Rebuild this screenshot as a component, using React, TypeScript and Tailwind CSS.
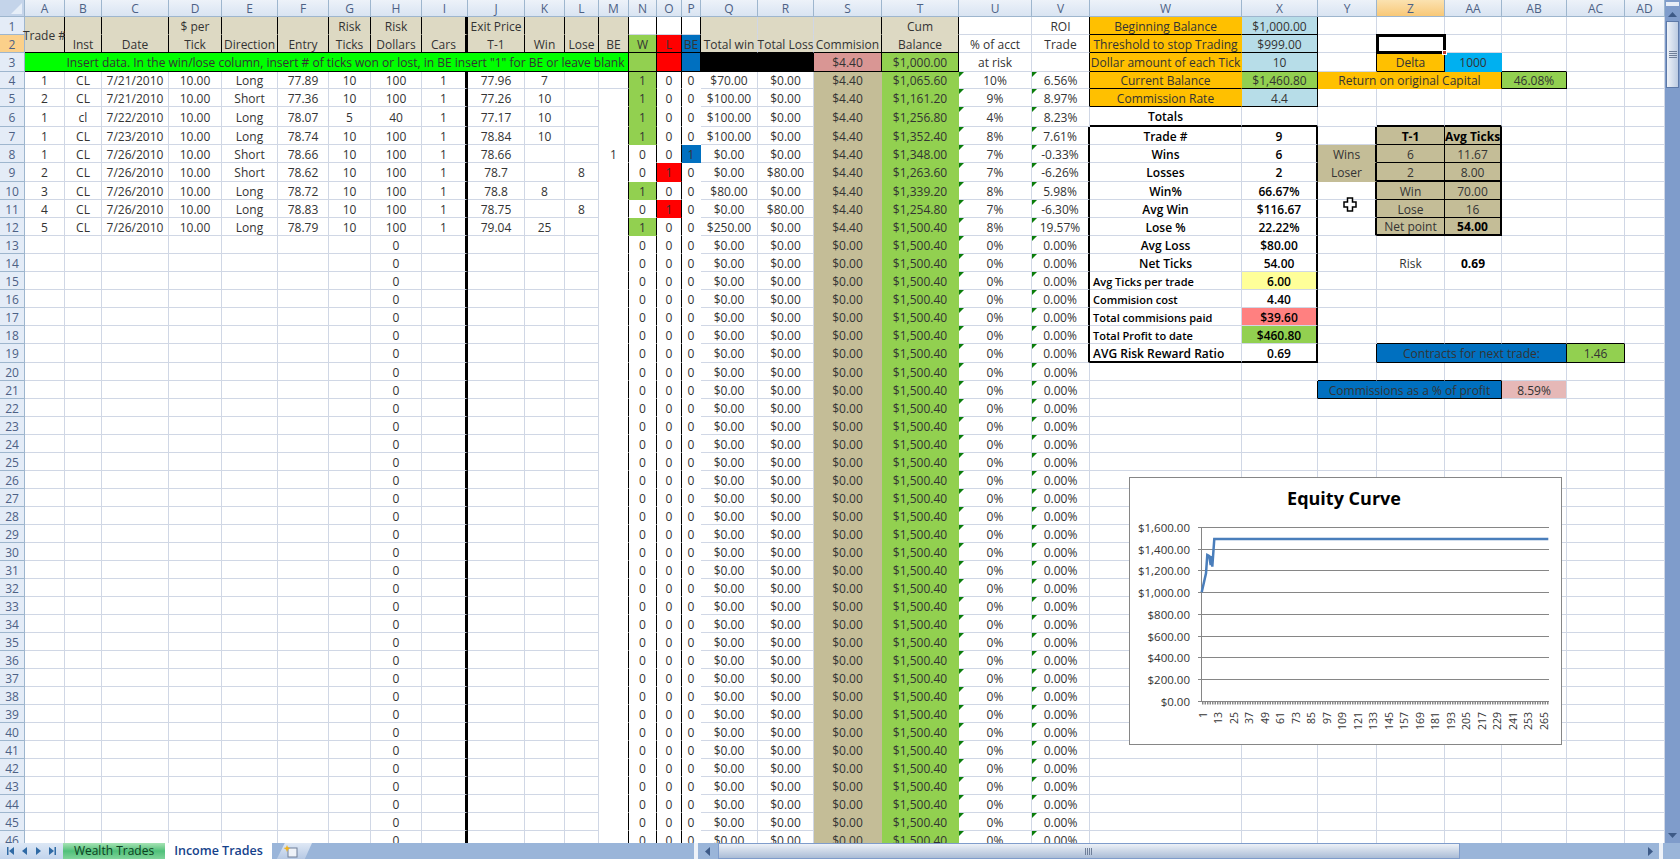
const COLS = ['A','B','C','D','E','F','G','H','I','J','K','L','M','N','O','P','Q','R','S','T','U','V','W','X','Y','Z','AA','AB','AC','AD'];
const ROW_COUNT = 46;

const GREEN = 'bg-[#92d050]';
const TAN = 'bg-[#c4bd97]';
const HEAD = 'bg-[#ddd9c3]';
const ORANGE = 'bg-[#ffc000]';
const SKY = 'bg-[#b7dde8]';
const BLUE = 'bg-[#0070c0]';
const RED = 'bg-[#ff0000]';

type Edge = 'g' | 'k' | 'K' | 'T' | 'n';
const RIGHT: Record<Edge, string> = {
  g: 'border-r border-r-[#d0d7e5]',
  k: 'border-r border-r-black',
  K: 'border-r-2 border-r-black',
  T: 'border-r-[3px] border-r-black',
  n: 'border-r border-r-transparent',
};
const BOTTOM: Record<Edge, string> = {
  g: 'border-b border-b-[#d0d7e5]',
  k: 'border-b border-b-black',
  K: 'border-b-2 border-b-black',
  T: 'border-b-[3px] border-b-black',
  n: 'border-b border-b-transparent',
};

// trade log, rows 4-12
const trades = [
  ['1','CL','7/21/2010','10.00','Long','77.89','10','100','1','77.96','7','','','1','0','0','$70.00','$0.00','$4.40','$1,065.60','10%','6.56%'],
  ['2','CL','7/21/2010','10.00','Short','77.36','10','100','1','77.26','10','','','1','0','0','$100.00','$0.00','$4.40','$1,161.20','9%','8.97%'],
  ['1','cl','7/22/2010','10.00','Long','78.07','5','40','1','77.17','10','','','1','0','0','$100.00','$0.00','$4.40','$1,256.80','4%','8.23%'],
  ['1','CL','7/23/2010','10.00','Long','78.74','10','100','1','78.84','10','','','1','0','0','$100.00','$0.00','$4.40','$1,352.40','8%','7.61%'],
  ['1','CL','7/26/2010','10.00','Short','78.66','10','100','1','78.66','','','1','0','0','1','$0.00','$0.00','$4.40','$1,348.00','7%','-0.33%'],
  ['2','CL','7/26/2010','10.00','Short','78.62','10','100','1','78.7','','8','','0','1','0','$0.00','$80.00','$4.40','$1,263.60','7%','-6.26%'],
  ['3','CL','7/26/2010','10.00','Long','78.72','10','100','1','78.8','8','','','1','0','0','$80.00','$0.00','$4.40','$1,339.20','8%','5.98%'],
  ['4','CL','7/26/2010','10.00','Long','78.83','10','100','1','78.75','','8','','0','1','0','$0.00','$80.00','$4.40','$1,254.80','7%','-6.30%'],
  ['5','CL','7/26/2010','10.00','Long','78.79','10','100','1','79.04','25','','','1','0','0','$250.00','$0.00','$4.40','$1,500.40','8%','19.57%'],
];
const emptyTrade = ['','','','','','','','0','','','','','','0','0','0','$0.00','$0.00','$0.00','$1,500.40','0%','0.00%'];

interface Special {
  t?: string;
  bg?: string;
  x?: string;
  r?: Edge;
  b?: Edge;
}

const specials: Record<string, Special> = {
  A1: { t: 'Trade #', bg: HEAD, x: 'row-span-2 overflow-visible', r: 'k', b: 'k' },
  B2: { t: 'Inst' }, C2: { t: 'Date' }, D1: { t: '$ per' }, D2: { t: 'Tick' }, E2: { t: 'Direction' },
  F2: { t: 'Entry' }, G1: { t: 'Risk' }, G2: { t: 'Ticks' }, H1: { t: 'Risk' }, H2: { t: 'Dollars' },
  I2: { t: 'Cars' }, J1: { t: 'Exit Price' }, J2: { t: 'T-1' }, K2: { t: 'Win' }, L2: { t: 'Lose' }, M2: { t: 'BE' },
  N2: { t: 'W' }, O2: { t: 'L' }, P2: { t: 'BE' }, Q2: { t: 'Total win' }, R2: { t: 'Total Loss' }, S2: { t: 'Commision' },
  T1: { t: 'Cum' }, T2: { t: 'Balance' }, U2: { t: '% of acct' }, U3: { t: 'at risk' }, V1: { t: 'ROI' }, V2: { t: 'Trade' },
  A3: { t: 'Insert data. In the win/lose column, insert # of ticks won or lost, in BE insert "1" for BE or leave blank', bg: 'bg-[#00ff00]', x: 'col-span-13 pl-[38px]', r: 'k', b: 'k' },
  N3: { bg: GREEN }, O3: { bg: RED }, P3: { bg: BLUE }, Q3: { bg: 'bg-black', r: 'n' }, R3: { bg: 'bg-black', r: 'n' },
  S3: { t: '$4.40', bg: 'bg-[#d99694]' }, T3: { t: '$1,000.00', bg: GREEN },

  W1: { t: 'Beginning Balance', bg: ORANGE, r: 'n', b: 'k' }, X1: { t: '$1,000.00', bg: SKY, r: 'k', b: 'k' },
  W2: { t: 'Threshold to stop Trading', bg: ORANGE, r: 'n', b: 'k' }, X2: { t: '$999.00', bg: SKY, r: 'k', b: 'k' },
  W3: { t: 'Dollar amount of each Tick', bg: ORANGE, r: 'n', b: 'k' }, X3: { t: '10', bg: SKY, r: 'k', b: 'k' },
  W4: { t: 'Current Balance', bg: ORANGE, r: 'n', b: 'k' }, X4: { t: '$1,460.80', bg: GREEN, r: 'k', b: 'k' },
  W5: { t: 'Commission Rate', bg: ORANGE, r: 'n', b: 'k' }, X5: { t: '4.4', bg: SKY, r: 'k', b: 'k' },
  Y3: { r: 'k' }, Z2: { x: 'z-10' },
  Z3: { t: 'Delta', bg: ORANGE, r: 'k', b: 'k' }, AA3: { t: '1000', bg: 'bg-[#00b0f0]', r: 'n', b: 'n' },
  Y4: { t: 'Return on original Capital', bg: ORANGE, x: 'col-span-3', r: 'k', b: 'n' },
  AB3: { b: 'k' }, AB4: { t: '46.08%', bg: GREEN, r: 'k', b: 'k' },
  W6: { t: 'Totals', x: 'font-semibold text-black', b: 'K' }, X6: { b: 'K' },
  Z6: { b: 'K' }, AA6: { b: 'K' },

  W7: { t: 'Trade #' }, X7: { t: '9' }, W8: { t: 'Wins' }, X8: { t: '6' }, W9: { t: 'Losses' }, X9: { t: '2' },
  W10: { t: 'Win%' }, X10: { t: '66.67%' }, W11: { t: 'Avg Win' }, X11: { t: '$116.67' }, W12: { t: 'Lose %' }, X12: { t: '22.22%' },
  W13: { t: 'Avg Loss' }, X13: { t: '$80.00' }, W14: { t: 'Net Ticks' }, X14: { t: '54.00' },
  W15: { t: 'Avg Ticks per trade' }, X15: { t: '6.00', bg: 'bg-[#ffff99]' },
  W16: { t: 'Commision cost' }, X16: { t: '4.40' },
  W17: { t: 'Total commisions paid' }, X17: { t: '$39.60', bg: 'bg-[#ff8080]' },
  W18: { t: 'Total Profit to date' }, X18: { t: '$460.80', bg: GREEN },
  W19: { t: 'AVG Risk Reward Ratio' }, X19: { t: '0.69' },

  Y8: { t: 'Wins', bg: TAN, r: 'K', b: 'n' }, Y9: { t: 'Loser', bg: TAN, r: 'K', b: 'n' },
  Z7: { t: 'T-1', bg: TAN, x: 'font-bold text-black', r: 'k', b: 'k' }, AA7: { t: 'Avg Ticks', bg: TAN, x: 'font-bold text-black', r: 'K', b: 'k' },
  Z8: { t: '6', bg: TAN, r: 'k', b: 'k' }, AA8: { t: '11.67', bg: TAN, r: 'K', b: 'k' },
  Z9: { t: '2', bg: TAN, r: 'k', b: 'K' }, AA9: { t: '8.00', bg: TAN, r: 'K', b: 'K' },
  Z10: { t: 'Win', bg: TAN, r: 'k', b: 'k' }, AA10: { t: '70.00', bg: TAN, r: 'K', b: 'k' },
  Z11: { t: 'Lose', bg: TAN, r: 'k', b: 'k' }, AA11: { t: '16', bg: TAN, r: 'K', b: 'k' },
  Z12: { t: 'Net point', bg: TAN, r: 'k', b: 'K' }, AA12: { t: '54.00', bg: TAN, x: 'font-bold text-black', r: 'K', b: 'K' },
  Y7: { r: 'K' }, Y10: { r: 'K' }, Y11: { r: 'K' }, Y12: { r: 'K' },
  Z14: { t: 'Risk' }, AA14: { t: '0.69', x: 'font-bold text-black' },

  Z18: { b: 'k' }, AA18: { b: 'k' }, AB18: { b: 'k' }, AC18: { b: 'k' }, Y19: { r: 'k' },
  Z19: { t: 'Contracts for next trade:', bg: BLUE, x: 'col-span-3', r: 'k', b: 'k' },
  AC19: { t: '1.46', bg: GREEN, r: 'k', b: 'k' },
  Y20: { b: 'k' }, Z20: { b: 'k' }, AA20: { b: 'k' }, X21: { r: 'k' },
  Y21: { t: 'Commissions as a % of profit', bg: BLUE, x: 'col-span-3', r: 'k', b: 'k' },
  AB21: { t: '8.59%', bg: 'bg-[#e6b8b7]' },
};

// cells swallowed by a merge
const covered = new Set([
  'A2','B3','C3','D3','E3','F3','G3','H3','I3','J3','K3','L3','M3',
  'Z4','AA4','AA19','AB19','Z21','AA21',
]);

function edges(col: string, n: number): { r: Edge; b: Edge } {
  const i = COLS.indexOf(col);
  if (i <= 12) {
    if (n <= 2) return { r: col === 'I' ? 'T' : 'k', b: n === 2 ? 'k' : 'n' };
    if (col === 'M') return { r: 'k', b: n === 4 ? 'g' : 'n' };
    return { r: col === 'I' ? 'T' : 'g', b: 'g' };
  }
  if (col === 'N' || col === 'O') return { r: 'k', b: n === 1 ? 'g' : n <= 3 ? 'k' : 'n' };
  if (col === 'P') return n <= 3 ? { r: 'k', b: n === 1 ? 'g' : 'k' } : { r: 'n', b: 'n' };
  if (col === 'Q' || col === 'R') return n <= 3 ? { r: 'g', b: n === 1 ? 'n' : 'k' } : { r: 'g', b: 'g' };
  if (col === 'S' || col === 'T') return n <= 3 ? { r: 'k', b: n === 1 ? 'n' : 'k' } : { r: 'n', b: 'n' };
  if (col === 'V') return { r: n <= 5 ? 'k' : n >= 7 && n <= 19 ? 'K' : 'g', b: 'g' };
  if (col === 'W' && n >= 7 && n <= 19) return { r: 'g', b: n === 19 ? 'K' : 'g' };
  if (col === 'X' && n >= 7 && n <= 19) return { r: 'K', b: n === 19 ? 'K' : 'g' };
  return { r: 'g', b: 'g' };
}

function fill(col: string, n: number, value: string): string {
  const i = COLS.indexOf(col);
  if (n <= 2 && (i <= 12 || ['Q', 'R', 'S', 'T'].includes(col))) return HEAD;
  if (n === 2 && col === 'N') return GREEN;
  if (n === 2 && col === 'O') return RED;
  if (n === 2 && col === 'P') return BLUE;
  if (n > 3) {
    if (col === 'S') return TAN;
    if (col === 'T') return GREEN;
    if (value === '1' && col === 'N') return GREEN;
    if (value === '1' && col === 'O') return RED;
    if (value === '1' && col === 'P') return BLUE;
  }
  return 'bg-white';
}

function Cell({ col, n }: { col: string; n: number }) {
  const key = col + n;
  const sp = specials[key] ?? {};
  const i = COLS.indexOf(col);
  let value = sp.t ?? '';
  if (n >= 4 && i <= 21) {
    const row = n <= 12 ? trades[n - 4] : emptyTrade;
    value = row[i];
  }
  const e = edges(col, n);
  const isLabel = col === 'W' && n >= 15 && n <= 19;
  const labelSize = n === 19 ? 'text-[12px]' : 'text-[11px]';
  const isBoxed = (col === 'W' || col === 'X') && n >= 7 && n <= 19;
  const flagged = (col === 'U' || col === 'V') && n >= 4;
  return (
    <div
      className={`relative box-border flex items-center overflow-visible whitespace-nowrap pt-[2px] leading-[14px] ${isLabel ? `justify-start pl-[3px] ${labelSize}` : 'justify-center'} ${isBoxed ? 'font-semibold text-black' : 'text-[#333]'} ${sp.bg ?? fill(col, n, value)} ${RIGHT[sp.r ?? e.r]} ${BOTTOM[sp.b ?? e.b]} ${sp.x ?? ''}`}
    >
      {flagged && <span className="absolute left-0 top-0 h-0 w-0 border-t-[5px] border-r-[5px] border-t-[#0a7d0a] border-r-transparent" />}
      {key === 'Z2' && (
        <span className="absolute -left-px -top-px bottom-[-2px] right-[-2px] border-[3px] border-black">
          <span className="absolute -bottom-[4px] -right-[4px] h-[5px] w-[5px] border border-white bg-[#c0392b]" />
        </span>
      )}
      {value}
    </div>
  );
}

function EquityChart() {
  const grid = [
    [527.5, '$1,600.00'], [549.5, '$1,400.00'], [570.5, '$1,200.00'], [592.5, '$1,000.00'], [614.5, '$800.00'],
    [636.5, '$600.00'], [657.5, '$400.00'], [679.5, '$200.00'], [701.5, '$0.00'],
  ] as const;
  const labels = Array.from({ length: 23 }, (_, k) => 1 + k * 12);
  return (
    <div className="absolute left-[1129px] top-[477px] h-[268px] w-[433px] border border-[#868686] bg-white">
      <svg width="431" height="266" viewBox="1130 478 431 266" fontFamily="'Open Sans', sans-serif">
        <text x="1344" y="505" textAnchor="middle" fontSize="18" fontWeight="700" fill="#000">Equity Curve</text>
        {grid.map(([y, label]) => (
          <g key={label}>
            <line x1="1198" x2="1549" y1={y} y2={y} stroke="#868686" />
            <text x="1190" y={y + 4} textAnchor="end" fontSize="11.5" fill="#333">{label}</text>
          </g>
        ))}
        <line x1="1201.5" x2="1201.5" y1="527" y2="702" stroke="#868686" />
        <line x1="1202" x2="1549" y1="703" y2="703" stroke="#868686" strokeWidth="3" strokeDasharray="1.5 1" />
        <polyline
          points="1201.7,592.3 1206,573.3 1207.3,555 1209.3,556 1210.7,565 1211.3,556 1212.3,566.7 1214.3,539 1548.3,539"
          fill="none"
          stroke="#4a7ebb"
          strokeWidth="2.5"
        />
        {labels.map((v, k) => {
          const x = 1207 + k * 15.48;
          return (
            <text key={v} x={x} y={712} textAnchor="end" fontSize="10.5" fill="#333" transform={`rotate(-90 ${x} 712)`}>
              {v}
            </text>
          );
        })}
      </svg>
    </div>
  );
}

function Sheet() {
  const rows = Array.from({ length: ROW_COUNT }, (_, k) => k + 1);
  return (
    <div className="relative h-[843px] w-[1665px] overflow-hidden">
      <div className="grid grid-cols-[25px_40px_37px_67px_53px_56px_51px_42px_51px_46px_57px_40px_34px_30px_28px_25px_19px_57px_56px_68px_77px_73px_58px_152px_76px_59px_68px_57px_65px_58px_40px] grid-rows-[17px_18px_18px_19px_17px_18px_20px_18px_18px_19px_18px_18px_18px_18px_18px_18px_18px_18px_18px_19px_repeat(27,18px)] text-[12px] [font-family:'Open_Sans',sans-serif]">
        <div className="box-border flex items-end justify-end border-r border-b border-[#9eb6ce] bg-[#c4d4ea] p-[2px]">
          <span className="h-0 w-0 border-b-[11px] border-l-[11px] border-b-[#e6eef8] border-l-transparent" />
        </div>
        {COLS.map((c) => (
          <div
            key={c}
            className={`box-border flex items-center justify-center border-r border-b border-[#9eb6ce] bg-linear-to-b pt-[2px] leading-[14px] text-[#4d6185] ${c === 'Z' ? 'from-[#fbe2b0] to-[#f8c877]' : 'from-[#edf2f9] to-[#d9e4f2]'}`}
          >
            {c}
          </div>
        ))}
        {rows.map((n) => [
          <div
            key={`h${n}`}
            className={`box-border flex items-center justify-center border-r border-b border-[#9eb6ce] pt-[2px] leading-[14px] text-[#4d6185] ${n === 2 ? 'bg-[#fbd08a]' : 'bg-[#e4ecf7]'}`}
          >
            {n}
          </div>,
          ...COLS.filter((c) => !covered.has(c + n)).map((c) => <Cell key={c + n} col={c} n={n} />),
        ])}
      </div>
      <EquityChart />
      {/* excel's fat plus cursor */}
      <svg className="absolute left-[1343px] top-[197px]" width="14" height="15" viewBox="0 0 14 15">
        <path d="M4.5 1h5v4h3.5v5H9.5v4h-5v-4H1V5h3.5z" fill="#fff" stroke="#000" strokeWidth="1.5" />
      </svg>
    </div>
  );
}

function VerticalScrollbar() {
  return (
    <div className="relative flex h-[843px] w-[15px] flex-col items-center bg-[#7f9ccb]">
      <div className="mt-[2px] h-[4px] w-[13px] bg-[#e8eef7]" />
      <svg className="mt-[6px]" width="9" height="5" viewBox="0 0 9 5"><path d="M4.5 0 9 5H0z" fill="#3d5a87" /></svg>
      <div className="mt-[4px] flex h-[67px] w-[13px] flex-col items-center justify-center gap-[1px] border border-[#5d79a8] bg-linear-to-r from-[#eef2f8] to-[#bccbe2]">
        <span className="h-px w-[8px] bg-[#6f7f99]" />
        <span className="h-px w-[8px] bg-[#6f7f99]" />
        <span className="h-px w-[8px] bg-[#6f7f99]" />
        <span className="h-px w-[8px] bg-[#6f7f99]" />
      </div>
      <svg className="absolute bottom-[5px]" width="9" height="5" viewBox="0 0 9 5"><path d="M0 0h9L4.5 5z" fill="#3d5a87" /></svg>
    </div>
  );
}

function BottomBar() {
  return (
    <div className="flex h-[16px] w-[1680px] items-stretch bg-[#9ab5d9] leading-[16px] [font-family:'Open_Sans',sans-serif]">
      <div className="flex w-[63px] items-center justify-around bg-linear-to-b from-[#dce7f5] to-[#c2d4ec] px-[3px]">
        <svg width="7" height="8" viewBox="0 0 7 8"><path d="M0 0h1.5v8H0zM7 0v8L2 4z" fill="#2f6aa5" /></svg>
        <svg width="5" height="8" viewBox="0 0 5 8"><path d="M5 0v8L0 4z" fill="#2f6aa5" /></svg>
        <svg width="5" height="8" viewBox="0 0 5 8"><path d="M0 0v8l5-4z" fill="#2f6aa5" /></svg>
        <svg width="7" height="8" viewBox="0 0 7 8"><path d="M0 0v8l5-4zM5.5 0H7v8H5.5z" fill="#2f6aa5" /></svg>
      </div>
      <div className="flex w-[102px] items-center justify-center bg-linear-to-b from-[#a5e3b4] via-[#4fc07a] to-[#7ed49a] text-[12px] text-[#0d4020]">
        Wealth Trades
      </div>
      <div className="flex w-[107px] items-center justify-center bg-white text-[12.5px] font-semibold text-[#15428b]">
        Income Trades
      </div>
      <div className="flex w-[40px] items-center bg-linear-to-b from-[#dfe8f5] to-[#b6c9e4] pl-[11px] [clip-path:polygon(12%_100%,32%_0,100%_0,82%_100%)]">
        <svg width="15" height="13" viewBox="0 0 15 13">
          <rect x="5" y="3" width="9" height="9" fill="#eef2f8" stroke="#6f7f99" />
          <path d="M4 0l1 2.5L7.5 3 5 4.5 4 7 3 4.5.5 3 3 2.5z" fill="#f2b31b" />
        </svg>
      </div>
      <div className="w-[382px]" />
      <div className="flex w-[24px] items-center">
        <span className="h-full w-[4px] bg-[#eef2f8]" />
        <svg className="ml-[7px]" width="5" height="9" viewBox="0 0 5 9"><path d="M5 0v9L0 4.5z" fill="#3d5a87" /></svg>
      </div>
      <div className="flex w-[742px] items-center justify-center border border-[#7f9ccb] bg-linear-to-b from-[#edf1f7] to-[#aabcd6]">
        <span className="h-[7px] w-[8px] bg-[repeating-linear-gradient(90deg,#6f7f99_0,#6f7f99_1px,transparent_1px,transparent_2px)]" />
      </div>
      <div className="flex flex-1 items-center justify-end pr-[17px]">
        <svg width="5" height="9" viewBox="0 0 5 9"><path d="M0 0v9l5-4.5z" fill="#3d5a87" /></svg>
        <span className="ml-[6px] h-full w-[4px] bg-[#eef2f8]" />
      </div>
    </div>
  );
}

export default function App() {
  return (
    <div className="h-[859px] w-[1680px] overflow-hidden bg-white">
      <div className="flex">
        <Sheet />
        <VerticalScrollbar />
      </div>
      <BottomBar />
    </div>
  );
}
